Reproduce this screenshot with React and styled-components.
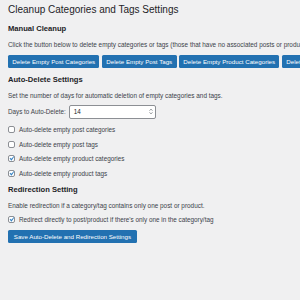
import React from 'react';
import styled, { createGlobalStyle } from 'styled-components';

const colors = {
  page: '#f0f0f1',
  heading: '#1d2327',
  text: '#3c434a',
  blue: '#2271b1',
  check: '#3582c4',
  border: '#8c8f94',
};

const GlobalStyle = createGlobalStyle`
  html, body {
    margin: 0;
    background: ${colors.page};
    overflow: hidden;
  }
  body {
    font-family: "Liberation Sans", Arial, sans-serif;
    color: ${colors.text};
  }
`;

const Wrap = styled.div`
  width: 300px;
  height: 300px;
  padding-left: 8px;
  box-sizing: border-box;
  overflow: hidden;
  white-space: nowrap;
`;

const Title = styled.h1`
  margin: 0;
  padding-top: 3px;
  font-size: 10px;
  line-height: 13px;
  font-weight: 400;
  color: ${colors.heading};
`;

const SectionTitle = styled.h2`
  margin: ${(p) => p.$top}px 0 0;
  font-size: 7.6px;
  line-height: 10px;
  font-weight: 700;
  color: ${colors.heading};
`;

const Text = styled.p`
  margin: ${(p) => p.$top}px 0 0;
  font-size: 6.4px;
  line-height: 9px;
`;

const ButtonRow = styled.div`
  display: flex;
  gap: 2.5px;
  margin-top: 6px;
`;

const Button = styled.button`
  flex: none;
  height: 13px;
  padding: 0 4.3px;
  border: none;
  border-radius: 1.5px;
  background: ${colors.blue};
  color: #fff;
  font-family: inherit;
  font-size: 6.2px;
  line-height: 13px;
  white-space: nowrap;
`;

const FieldRow = styled.div`
  display: flex;
  align-items: center;
  gap: 3px;
  margin-top: 4.5px;
  font-size: 6.3px;
`;

const NumberField = styled.div`
  display: flex;
  align-items: center;
  width: 87px;
  height: 14px;
  box-sizing: border-box;
  padding: 0 2px 0 4px;
  background: #fff;
  border: 1px solid ${colors.border};
  border-radius: 2px;
  font-size: 6.3px;
  color: ${colors.heading};
`;

const NumberValue = styled.span`
  flex: 1;
`;

const CheckList = styled.div`
  display: flex;
  flex-direction: column;
  gap: 5.5px;
  margin-top: ${(p) => p.$top}px;
`;

const CheckRow = styled.label`
  display: flex;
  align-items: center;
  gap: 4px;
  height: 9px;
  font-size: 6.35px;
`;

const Box = styled.span`
  position: relative;
  flex: none;
  width: 7px;
  height: 7px;
  box-sizing: border-box;
  border: 1px solid ${colors.border};
  border-radius: 2px;
  background: #fff;

  & svg {
    position: absolute;
    left: -1.8px;
    top: -2px;
  }
`;

const SaveButton = styled(Button)`
  display: block;
  margin-top: 5.5px;
  padding: 0 5.8px;
`;

function Checkbox({ checked, children }) {
  return (
    <CheckRow>
      <Box>
        {checked && (
          <svg width="9" height="9" viewBox="0 0 20 20">
            <path d="M14.83 4.89l1.34.94-5.81 8.38H9.02L5.78 9.67l1.34-1.25 2.57 2.4z" fill={colors.check} />
          </svg>
        )}
      </Box>
      {children}
    </CheckRow>
  );
}

export default function App() {
  return (
    <>
      <GlobalStyle />
      <Wrap>
        <Title>Cleanup Categories and Tags Settings</Title>

        <SectionTitle $top={8}>Manual Cleanup</SectionTitle>
        <Text $top={6}>
          Click the button below to delete empty categories or tags (those that have no associated posts or products).
        </Text>
        <ButtonRow>
          <Button>Delete Empty Post Categories</Button>
          <Button>Delete Empty Post Tags</Button>
          <Button>Delete Empty Product Categories</Button>
          <Button>Delete Empty Product Tags</Button>
        </ButtonRow>

        <SectionTitle $top={7}>Auto-Delete Settings</SectionTitle>
        <Text $top={6}>Set the number of days for automatic deletion of empty categories and tags.</Text>
        <FieldRow>
          <span>Days to Auto-Delete:</span>
          <NumberField>
            <NumberValue>14</NumberValue>
            <svg width="4" height="7" viewBox="0 0 4 7">
              <path d="M0.6 2.6 L2 1.2 L3.4 2.6 M0.6 4.4 L2 5.8 L3.4 4.4" stroke="#50575e" strokeWidth="0.7" fill="none" />
            </svg>
          </NumberField>
        </FieldRow>
        <CheckList $top={6.5}>
          <Checkbox>Auto-delete empty post categories</Checkbox>
          <Checkbox>Auto-delete empty post tags</Checkbox>
          <Checkbox checked>Auto-delete empty product categories</Checkbox>
          <Checkbox checked>Auto-delete empty product tags</Checkbox>
        </CheckList>

        <SectionTitle $top={7}>Redirection Setting</SectionTitle>
        <Text $top={6}>Enable redirection if a category/tag contains only one post or product.</Text>
        <CheckList $top={5.5}>
          <Checkbox checked>Redirect directly to post/product if there's only one in the category/tag</Checkbox>
        </CheckList>
        <SaveButton>Save Auto-Delete and Redirection Settings</SaveButton>
      </Wrap>
    </>
  );
}
